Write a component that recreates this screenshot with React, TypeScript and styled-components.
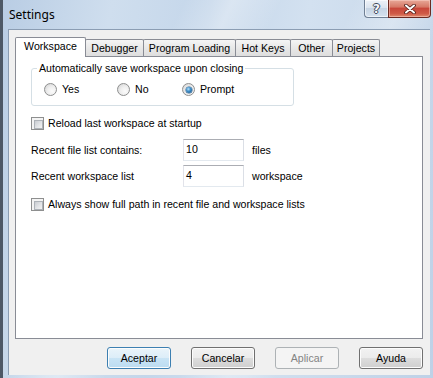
import React from 'react'
import styled, { createGlobalStyle } from 'styled-components'

const GlobalStyle = createGlobalStyle`
  html, body {
    margin: 0;
    padding: 0;
  }
  body {
    width: 433px;
    height: 378px;
    overflow: hidden;
    font-family: "Liberation Sans", Arial, sans-serif;
    font-size: 10.6px;
    color: #000;
  }
`

const tabs = [
    { label: 'Workspace', width: 71, active: true },
    { label: 'Debugger', width: 59 },
    { label: 'Program Loading', width: 93 },
    { label: 'Hot Keys', width: 56 },
    { label: 'Other', width: 43 },
    { label: 'Projects', width: 48 },
]

const CloseGlyph = () => (
    <svg width="12" height="10" viewBox="0 0 12 10">
        <path d="M2 1.5 L10 8.5 M10 1.5 L2 8.5" stroke="#4a1a14" strokeWidth="3.6" strokeLinecap="round" />
        <path d="M2 1.5 L10 8.5 M10 1.5 L2 8.5" stroke="#ffffff" strokeWidth="2" strokeLinecap="round" />
    </svg>
)

const App = () => {
    return (
        <>
            <GlobalStyle />
            <Window>
                <TitleBar>
                    <Title>Settings</Title>
                    <CaptionButtons>
                        <HelpButton>?</HelpButton>
                        <CloseButton><CloseGlyph /></CloseButton>
                    </CaptionButtons>
                </TitleBar>
                <Client>
                    <TabStrip>
                        {tabs.map((t) => (
                            <Tab key={t.label} $width={t.width} $active={!!t.active}>{t.label}</Tab>
                        ))}
                    </TabStrip>
                    <Panel>
                        <GroupBox>
                            <Legend>Automatically save workspace upon closing</Legend>
                            <RadioRow>
                                <Option><Radio /><span>Yes</span></Option>
                                <Option><Radio /><span>No</span></Option>
                                <Option><Radio $checked /><span>Prompt</span></Option>
                            </RadioRow>
                        </GroupBox>
                        <CheckRow $top={11}>
                            <Check />
                            <span>Reload last workspace at startup</span>
                        </CheckRow>
                        <FieldGrid>
                            <FieldLabel>Recent file list contains:</FieldLabel>
                            <TextBox>10</TextBox>
                            <Unit>files</Unit>
                            <FieldLabel>Recent workspace list</FieldLabel>
                            <TextBox>4</TextBox>
                            <Unit>workspace</Unit>
                        </FieldGrid>
                        <CheckRow $top={11}>
                            <Check />
                            <span>Always show full path in recent file and workspace lists</span>
                        </CheckRow>
                    </Panel>
                    <ButtonRow>
                        <Button $variant="default">Aceptar</Button>
                        <Button>Cancelar</Button>
                        <Button $variant="disabled">Aplicar</Button>
                        <Button>Ayuda</Button>
                    </ButtonRow>
                </Client>
            </Window>
        </>
    )
}

const Window = styled.div`
    box-sizing: border-box;
    width: 433px;
    height: 378px;
    display: flex;
    flex-direction: column;
    padding: 0 3px 3px 5px;
    border-left: 3px solid #4d5866;
    background:
        linear-gradient(115deg, rgba(255, 255, 255, 0) 30%, rgba(255, 255, 255, 0.35) 38%, rgba(255, 255, 255, 0) 46%),
        linear-gradient(115deg, rgba(255, 255, 255, 0) 58%, rgba(255, 255, 255, 0.3) 66%, rgba(255, 255, 255, 0) 74%),
        linear-gradient(100deg, #b9cde4 0%, #cfdeee 22%, #c4d6ea 42%, #d3e1f0 62%, #c9d9eb 82%, #bed1e7 100%);
`

const TitleBar = styled.div`
    height: 29px;
    flex: none;
    display: flex;
    align-items: flex-start;
    justify-content: space-between;
`

const Title = styled.div`
    margin: 7px 0 0 1px;
    font-family: "Noto Sans", "Open Sans", sans-serif;
    font-size: 12px;
    line-height: 16px;
    color: #000;
`

const CaptionButtons = styled.div`
    display: flex;
    margin-right: -1px;
`

const HelpButton = styled.div`
    box-sizing: border-box;
    width: 24px;
    height: 18px;
    border: 1px solid #6f7f94;
    border-top: none;
    border-right: none;
    border-radius: 0 0 0 4px;
    background: linear-gradient(#edf2f8 0%, #dbe4ef 45%, #c6d4e4 50%, #d6e2ef 100%);
    box-shadow: inset 0 0 0 1px rgba(255, 255, 255, 0.6);
    display: flex;
    align-items: center;
    justify-content: center;
    font-family: "DejaVu Sans", sans-serif;
    font-weight: bold;
    font-size: 12px;
    color: #f6f8fb;
    text-shadow: 1px 0 #3d4a5c, -1px 0 #3d4a5c, 0 1px #3d4a5c, 0 -1px #3d4a5c;
`

const CloseButton = styled.div`
    box-sizing: border-box;
    width: 43px;
    height: 18px;
    border: 1px solid #6b2a22;
    border-top: none;
    border-radius: 0 0 4px 0;
    background: linear-gradient(#e8a898 0%, #d77a68 40%, #c8473a 50%, #cf5a47 80%, #e08a6e 100%);
    box-shadow: inset 0 0 0 1px rgba(255, 220, 210, 0.45);
    display: flex;
    align-items: center;
    justify-content: center;
`

const Client = styled.div`
    flex: 1;
    display: flex;
    flex-direction: column;
    background: #f0f0f0;
    border-left: 1px solid #8b9db3;
    border-top: 1px solid #8b9db3;
    padding: 7px 7px 6px 6px;
    min-height: 0;
`

const TabStrip = styled.div`
    display: flex;
    align-items: flex-end;
`

const Tab = styled.div<{ $width: number; $active: boolean }>`
    box-sizing: border-box;
    position: relative;
    z-index: ${(p) => (p.$active ? 1 : 0)};
    width: ${(p) => p.$width}px;
    height: ${(p) => (p.$active ? 20 : 17)}px;
    margin-bottom: ${(p) => (p.$active ? -1 : 0)}px;
    margin-left: -1px;
    &:first-child {
        margin-left: 0;
    }
    padding-top: 2px;
    border: 1px solid #898c95;
    border-bottom: none;
    border-radius: 2px 2px 0 0;
    background: ${(p) => (p.$active ? '#ffffff' : 'linear-gradient(#f5f5f5, #e8e8e8 50%, #dedede 100%)')};
    text-align: center;
    line-height: 13px;
    white-space: nowrap;
`

const Panel = styled.div`
    flex: 1;
    display: flex;
    flex-direction: column;
    align-items: flex-start;
    background: #ffffff;
    border: 1px solid #898c95;
    padding: 5px 15px 0 15px;
`

const GroupBox = styled.fieldset`
    box-sizing: border-box;
    width: 263px;
    margin: 0;
    padding: 8px 0 9px 0;
    border: 1px solid #d5dfe5;
    border-radius: 3px;
`

const Legend = styled.legend`
    margin-left: 5px;
    padding: 0 2px;
    line-height: 13px;
`

const RadioRow = styled.div`
    display: grid;
    grid-template-columns: 73px 65px auto;
    padding-left: 12px;
`

const Option = styled.label`
    display: flex;
    align-items: center;
    gap: 5px;
    line-height: 13px;
`

const Radio = styled.span<{ $checked?: boolean }>`
    box-sizing: border-box;
    position: relative;
    width: 13px;
    height: 13px;
    border-radius: 50%;
    border: 1px solid #8e8f8f;
    background: radial-gradient(circle at 65% 65%, #fbfbfb 0%, #eeeeee 45%, #cfcfcf 100%);
    &::after {
        content: '';
        display: ${(p) => (p.$checked ? 'block' : 'none')};
        position: absolute;
        left: 2.5px;
        top: 2.5px;
        width: 6px;
        height: 6px;
        border-radius: 50%;
        background: radial-gradient(circle at 40% 35%, #b9e3fb 0%, #3f8fc9 40%, #11487a 100%);
        box-shadow: 0 0 0 0.5px #2a5f8c;
    }
`

const CheckRow = styled.label<{ $top: number }>`
    display: flex;
    align-items: center;
    gap: 4px;
    margin-top: ${(p) => p.$top}px;
    line-height: 13px;
    white-space: nowrap;
`

const Check = styled.span`
    box-sizing: border-box;
    position: relative;
    width: 13px;
    height: 13px;
    border: 1px solid #8e8f8f;
    background: #f4f4f4;
    &::after {
        content: '';
        position: absolute;
        left: 2px;
        top: 2px;
        width: 7px;
        height: 7px;
        border: 1px solid #adb2b8;
        background: linear-gradient(135deg, #c9ccd1 0%, #e2e4e7 55%, #f3f3f3 100%);
    }
`

const FieldGrid = styled.div`
    display: grid;
    grid-template-columns: 152px 61px auto;
    row-gap: 4px;
    margin-top: 9px;
    align-items: center;
`

const FieldLabel = styled.span`
    line-height: 13px;
    white-space: nowrap;
`

const Unit = styled(FieldLabel)`
    padding-left: 8px;
`

const TextBox = styled.div`
    box-sizing: border-box;
    width: 61px;
    height: 22px;
    padding: 3px 2px 0;
    line-height: 13px;
    background: #ffffff;
    border: 1px solid;
    border-color: #abadb3 #dbdfe6 #e3e9ef #e2e3ea;
`

const ButtonRow = styled.div`
    display: flex;
    justify-content: flex-end;
    gap: 20px;
    margin-top: 8px;
`

const Button = styled.div<{ $variant?: 'default' | 'disabled' }>`
    box-sizing: border-box;
    width: 64px;
    height: 22px;
    display: flex;
    align-items: center;
    justify-content: center;
    border-radius: 3px;
    border: 1px solid ${(p) => (p.$variant === 'default' ? '#3c7fb1' : p.$variant === 'disabled' ? '#adb2b5' : '#707070')};
    background: ${(p) =>
        p.$variant === 'default'
            ? 'linear-gradient(#eaf4fa 0%, #dcedf8 50%, #c9e4f5 50%, #bcdcf1 100%)'
            : p.$variant === 'disabled'
            ? '#f4f4f4'
            : 'linear-gradient(#f2f2f2 0%, #ebebeb 50%, #dddddd 50%, #cfcfcf 100%)'};
    box-shadow: inset 0 0 0 1px ${(p) => (p.$variant === 'disabled' ? '#f4f4f4' : '#fcfcfc')};
    color: ${(p) => (p.$variant === 'disabled' ? '#838383' : '#000')};
`

export default App
